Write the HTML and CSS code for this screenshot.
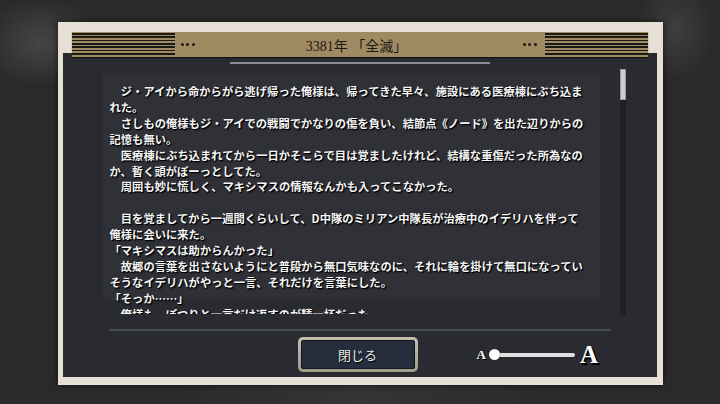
FILE: index.html
```html
<!DOCTYPE html>
<html lang="ja">
<head>
<meta charset="utf-8">
<link rel="stylesheet" href="styles.css">
</head>
<body>
<div class="frame">
  <div class="header">
    <div class="stripes"></div>
    <div class="dots"><i></i><i></i><i></i></div>
    <div class="title">3381年 「全滅」</div>
    <div class="dots dots-right"><i></i><i></i><i></i></div>
    <div class="stripes"></div>
  </div>
  <div class="panel">
    <div class="topline"></div>
    <div class="content">
      <div class="textbox">
        <p class="story">　ジ・アイから命からがら逃げ帰った俺様は、帰ってきた早々、施設にある医療棟にぶち込ま<br>れた。<br>　さしもの俺様もジ・アイでの戦闘でかなりの傷を負い、結節点《ノード》を出た辺りからの<br>記憶も無い。<br>　医療棟にぶち込まれてから一日かそこらで目は覚ましたけれど、結構な重傷だった所為なの<br>か、暫く頭がぼーっとしてた。<br>　周囲も妙に慌しく、マキシマスの情報なんかも入ってこなかった。<br><br>　目を覚ましてから一週間くらいして、D中隊のミリアン中隊長が治療中のイデリハを伴って<br>俺様に会いに来た。<br>「マキシマスは助からんかった」<br>　故郷の言葉を出さないようにと普段から無口気味なのに、それに輪を掛けて無口になってい<br>そうなイデリハがやっと一言、それだけを言葉にした。<br>「そっか……」<br>　俺様も、ぽつりと一言だけ返すのが精一杯だった。</p>
      </div>
      <div class="scrollbar"><div class="thumb"></div></div>
    </div>
    <div class="separator"></div>
    <div class="controls">
      <button class="close-btn"><span>閉じる</span></button>
      <div class="slider">
        <span class="a-small">A</span>
        <div class="track"><div class="knob"></div></div>
        <span class="a-big">A</span>
      </div>
    </div>
  </div>
</div>
</body>
</html>
```
FILE: styles.css
```css
html, body {
  margin: 0;
  padding: 0;
}
body {
  width: 720px;
  height: 404px;
  overflow: hidden;
  background:
    radial-gradient(ellipse 60px 45px at 40px 42px, rgba(120,120,120,0.35), transparent),
    radial-gradient(ellipse 40px 50px at 675px 30px, rgba(110,110,110,0.3), transparent),
    radial-gradient(ellipse 200px 60px at 360px 400px, rgba(70,70,70,0.4), transparent),
    #2a2a2a;
  font-family: "Noto Sans CJK JP", sans-serif;
}
.frame {
  width: 594px;
  height: 349px;
  margin: 22px auto 0;
  padding: 10px 6px 4px 5px;
  background: #e6e0d7;
  box-shadow: 0 0 6px rgba(0,0,0,0.6);
}
.header {
  position: relative;
  z-index: 1;
  height: 25px;
  margin: 0 9px -4px 9px;
  background: #a08a62;
  display: flex;
  align-items: center;
  box-shadow: 0 1px 1px rgba(0,0,0,0.5);
}
.stripes {
  width: 103px;
  height: 23px;
  background: repeating-linear-gradient(to bottom, #1b1914 0 1.6px, transparent 1.6px 3.33px);
}
.dots {
  display: flex;
  gap: 2.5px;
  margin-left: 6px;
}
.dots i {
  width: 3px;
  height: 3px;
  border-radius: 50%;
  background: #1d1a14;
}
.dots-right {
  margin-left: 0;
  margin-right: 8px;
}
.title {
  flex: 1;
  text-align: center;
  font-family: "Liberation Serif", "Noto Sans CJK JP", serif;
  font-size: 14px;
  color: #1c1914;
  padding-right: 4px;
}
.panel {
  height: 315px;
  padding: 9px 0 0 0;
  background: #2a2b30;
}
.topline {
  width: 260px;
  height: 2px;
  margin: 0 auto;
  background: #8c8c8e;
}
.content {
  display: flex;
  margin-top: 5px;
  height: 246px;
}
.textbox {
  width: 490px;
  height: 230px;
  margin: 4px 0 0 40px;
  padding: 11px 0 0 7px;
  overflow: hidden;
  background: linear-gradient(#303137, #303137) top left / 100% 227px no-repeat;
}
.story {
  margin: 0;
  white-space: nowrap;
  font-size: 11.3px;
  line-height: 15.9px;
  font-weight: bold;
  color: #f6f6f6;
  text-shadow: 1px 1px 0 #000, 1px 1px 2px #000;
}
.scrollbar {
  width: 6px;
  height: 246px;
  margin-left: 20px;
  background: #1e1f23;
}
.thumb {
  height: 31px;
  background: #cdcdcd;
  border-radius: 1px;
  box-shadow: inset 0 0 0 1px #9a9a9a;
}
.separator {
  width: 502px;
  height: 2px;
  margin: 14px 0 0 46px;
  background: #474b53;
}
.controls {
  display: flex;
  align-items: center;
  margin-top: 6px;
  padding-left: 235px;
}
.close-btn {
  width: 120px;
  height: 35px;
  padding: 3px;
  border: none;
  border-radius: 5px;
  background: linear-gradient(#c4bfae, #9f9b8a);
  display: flex;
}
.close-btn span {
  flex: 1;
  display: flex;
  align-items: center;
  justify-content: center;
  background: #262d3c;
  border: 1px solid #12151c;
  border-radius: 2px;
  color: #ececec;
  font-family: "Noto Sans CJK JP", sans-serif;
  font-size: 13px;
  text-shadow: 1px 1px 1px #000;
}
.slider {
  display: flex;
  align-items: center;
  margin-left: 59px;
}
.a-small {
  font-family: "Liberation Serif", serif;
  font-weight: bold;
  font-size: 13px;
  color: #fff;
  text-shadow: 1px 1px 0 #000;
  margin-top: 1px;
}
.track {
  position: relative;
  width: 86px;
  height: 4px;
  margin-left: 3px;
  border-radius: 2px;
  background: #e0e0e0;
}
.knob {
  position: absolute;
  left: 0;
  top: -4px;
  width: 11px;
  height: 11px;
  border-radius: 50%;
  background: #fff;
  box-shadow: 0 0 1px #000;
}
.a-big {
  font-family: "Liberation Serif", serif;
  font-weight: bold;
  font-size: 25px;
  line-height: 25px;
  color: #fff;
  margin-left: 5px;
  text-shadow: 1px 1px 0 #000, 2px 2px 0 #000;
}
```
